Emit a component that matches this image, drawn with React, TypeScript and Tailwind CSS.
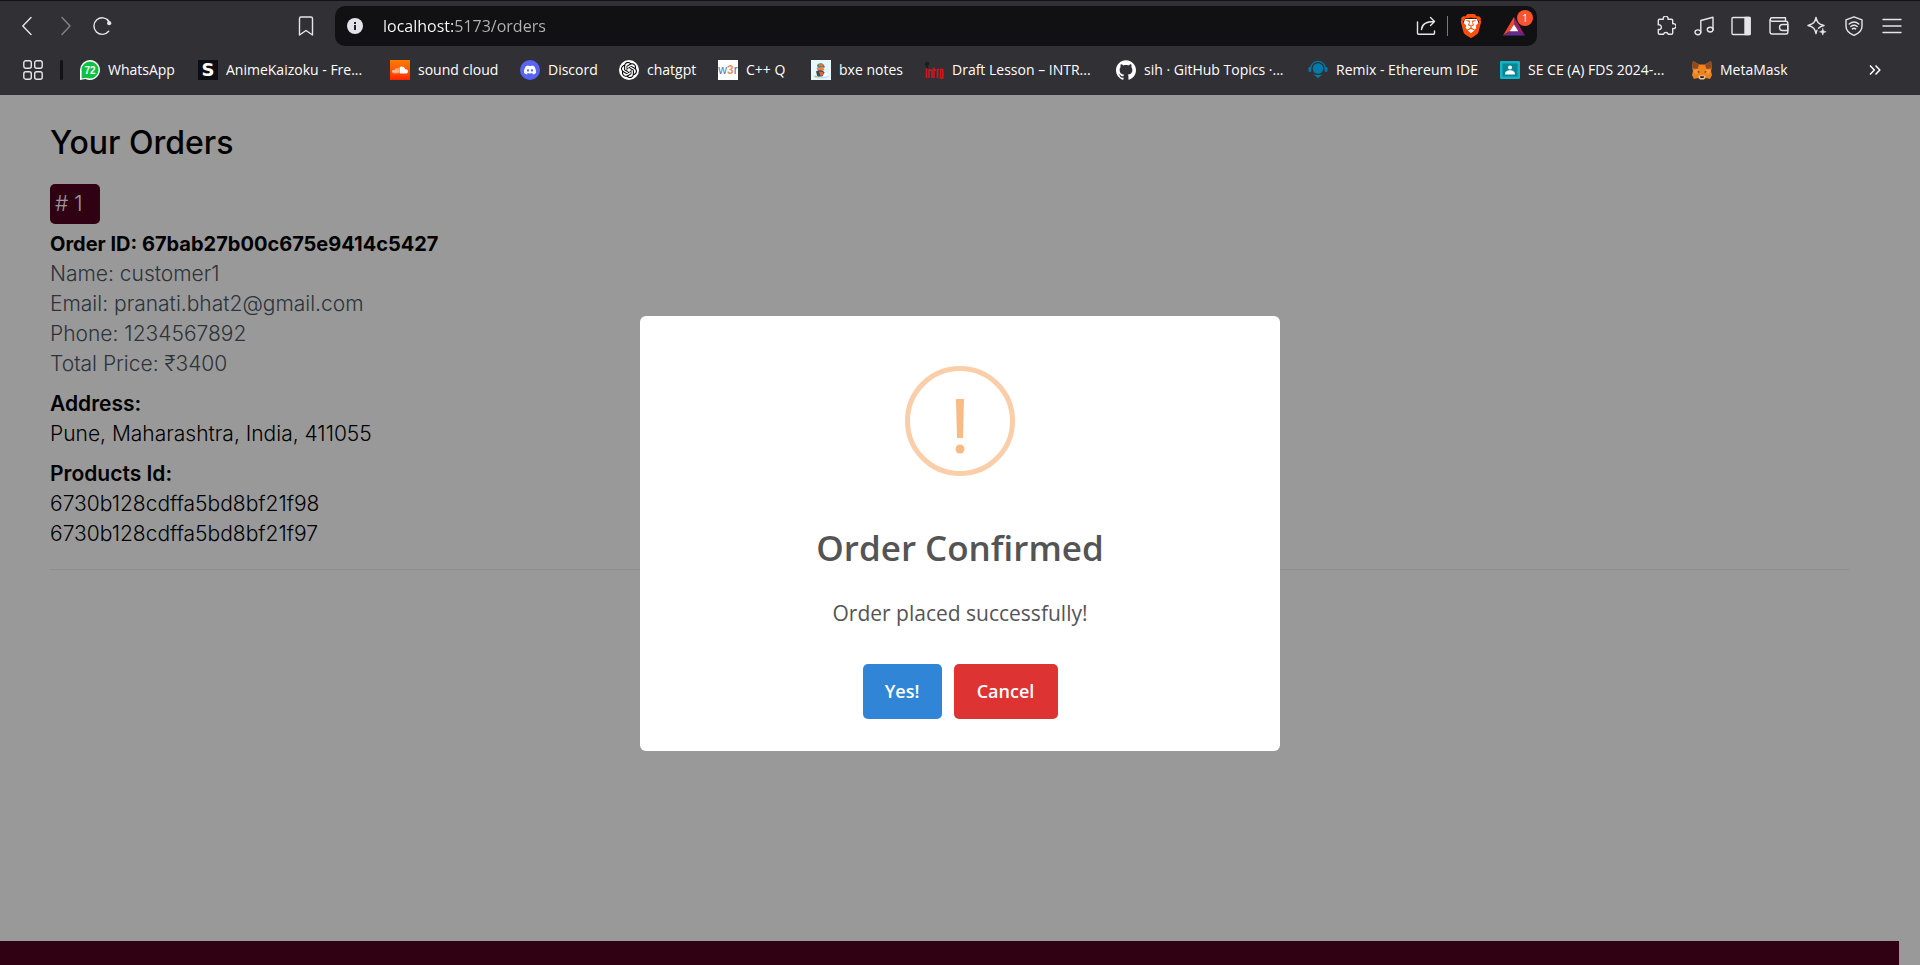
import type { ReactNode } from "react";
import { SiBrave, SiDiscord, SiGithub, SiOpenai, SiSoundcloud } from "react-icons/si";

const stroke = {
  fill: "none",
  stroke: "currentColor",
  strokeWidth: 1.4,
  strokeLinecap: "round" as const,
  strokeLinejoin: "round" as const,
};

function Glyph({ children }: { children: ReactNode }) {
  return (
    <svg viewBox="0 0 20 20" className="size-5 shrink-0" aria-hidden="true" {...stroke}>
      {children}
    </svg>
  );
}

function ToolButton({ label, children, className = "" }: { label: string; children: ReactNode; className?: string }) {
  return (
    <button type="button" aria-label={label} className={`flex size-5 shrink-0 items-center justify-center text-[#e6e6ea] ${className}`}>
      {children}
    </button>
  );
}

function WhatsAppIcon() {
  return (
    <svg viewBox="0 0 20 20" className="size-5 shrink-0" aria-hidden="true">
      <path d="M10 0a10 10 0 1 1-4.6 18.900L0 20V10A10 10 0 0 1 10 0z" fill="#fff" />
      <circle cx="10" cy="10" r="8.600" fill="#0fc143" />
      <path d="M1.600 12v6.400l5-.6z" fill="#0fc143" />
      <text x="10" y="13.500" textAnchor="middle" fontSize="10" fontWeight="700" fill="#fff" fontFamily="Liberation Sans, sans-serif">72</text>
    </svg>
  );
}

function AnimeIcon() {
  return (
    <span className="flex size-5 shrink-0 items-center justify-center bg-[#0b0e12] font-['DejaVu_Sans',sans-serif] text-lg leading-5 font-bold text-white">
      S
    </span>
  );
}

function SoundCloudIcon() {
  return (
    <span className="flex size-5 shrink-0 items-center justify-center bg-linear-to-b from-[#ff7a00] to-[#ff2200]">
      <SiSoundcloud className="size-4 text-white" />
    </span>
  );
}

function DiscordIcon() {
  return (
    <span className="flex size-5 shrink-0 items-center justify-center rounded-full bg-[#5865f2]">
      <SiDiscord className="size-3 text-white" />
    </span>
  );
}

function ChatIcon() {
  return (
    <span className="flex size-5 shrink-0 items-center justify-center rounded-full bg-white">
      <SiOpenai className="size-4 text-black" />
    </span>
  );
}

function W3rIcon() {
  return (
    <span className="flex size-5 shrink-0 items-center justify-center bg-white font-['Liberation_Sans',sans-serif] text-xs leading-5 text-[#4a7ab5]">
      w<span className="font-bold text-[#f0925a]">3</span>r
    </span>
  );
}

function PenguinIcon() {
  return (
    <svg viewBox="0 0 20 20" className="size-5 shrink-0" aria-hidden="true">
      <rect width="20" height="20" fill="#e6f8fc" />
      <path d="M2 16.500c4-2 12-2 16 0-3 2.500-13 2.500-16 0z" fill="#b9e3ef" />
      <path d="M6 5.500c1-2.500 5-3 7-.500l1 2.500-7 1z" fill="#2f8f84" />
      <path d="M7.500 4.500l4-1 1 2-4.500 1z" fill="#e9743b" />
      <path d="M5.500 8l6-1.500 2 3.500-6 2z" fill="#f08247" />
      <path d="M5 11.500c3-2 7-1.500 8.500 1l-1 3.500-6 .8z" fill="#3b4a57" />
      <path d="M8 11.500l4 .5 1 3-3.500 1z" fill="#e2653a" />
      <path d="M13 13.500c2-1 4-.5 4.500 1l-2 2-4 .3z" fill="#fff" />
      <path d="M4 15.500l3 .8 1 1-4-.3z" fill="#f0b04a" />
    </svg>
  );
}

function IntroIcon() {
  return (
    <svg viewBox="0 0 20 20" className="size-5 shrink-0" aria-hidden="true">
      <circle cx="3" cy="4" r="2.200" fill="#1e1c20" />
      <path d="M2.200 5v3h1.600V5z" fill="#1e1c20" />
      <path d="M2.500 8.500v9.500M5 18V9M5 10l3 0v8M10 7.500V18M10 10h2M13.500 18V9.500h1.500M16.500 9.500h2.300V18h-2.300z" fill="none" stroke="#d3171c" strokeWidth="1.600" />
    </svg>
  );
}

function GithubIcon() {
  return <SiGithub className="size-5 shrink-0 text-white" />;
}

function RemixIcon() {
  return (
    <svg viewBox="0 0 20 20" className="size-5 shrink-0" aria-hidden="true">
      <circle cx="10" cy="8.500" r="5.300" fill="#007aa6" />
      <path d="M2.800 8.500a7.200 7.200 0 0 1 14.400 0" fill="none" stroke="#007aa6" strokeWidth="1.300" />
      <rect x="0.500" y="7" width="2.800" height="5" rx="1.300" fill="#007aa6" />
      <rect x="16.700" y="7" width="2.800" height="5" rx="1.300" fill="#007aa6" />
      <path d="M4.500 13.500c3 2 8 2 11 0L10 18.300z" fill="#007aa6" />
    </svg>
  );
}

function ClassroomIcon() {
  return (
    <svg viewBox="0 0 20 20" className="size-5 shrink-0" aria-hidden="true">
      <rect y="1" width="20" height="18" rx="1" fill="#12b3c7" />
      <rect x="2.500" y="3.500" width="15" height="13" fill="#0a8593" />
      <circle cx="10" cy="7.500" r="2" fill="#fff" />
      <path d="M5 14.500c0-3 2-4.300 5-4.300s5 1.300 5 4.300z" fill="#fff" />
    </svg>
  );
}

function FoxIcon() {
  return (
    <svg viewBox="0 0 20 20" className="size-5 shrink-0" aria-hidden="true">
      <path d="M1 1l6 3.500h6L19 1l1 6-1 4 1 4-2 4-4-1-2 1.500H8L6 18l-4 1-2-4 1-4-1-4z" fill="#f0821f" />
      <path d="M1 1l6 3.800L5.500 9 .8 8.500 0 7zM19 1l-6 3.800L14.500 9l4.700-.5L20 7z" fill="#8f4a20" />
      <path d="M1.500 10.500l4-1.500 1.500 4-4 1zM18.500 10.500l-4-1.500-1.500 4 4 1z" fill="#f79a3a" />
      <path d="M5.500 11l2.500 1-2 .8zM14.500 11L12 12l2 .8z" fill="#3a2a22" />
      <path d="M6.500 16.500L8 19.300h4l1.500-2.800L12 15.500H8z" fill="#d9cdc2" />
      <path d="M8 16.300h4l-.5 1.800h-3z" fill="#1d1a1a" />
    </svg>
  );
}

const bookmarks = [
  { label: "WhatsApp", icon: <WhatsAppIcon />, width: "w-[98px]" },
  { label: "AnimeKaizoku - Fre...", icon: <AnimeIcon />, width: "w-[172px]" },
  { label: "sound cloud", icon: <SoundCloudIcon />, width: "w-[110px]" },
  { label: "Discord", icon: <DiscordIcon />, width: "w-[79px]" },
  { label: "chatgpt", icon: <ChatIcon />, width: "w-[79px]" },
  { label: "C++ Q", icon: <W3rIcon />, width: "w-[73px]" },
  { label: "bxe notes", icon: <PenguinIcon />, width: "w-[93px]" },
  { label: "Draft Lesson – INTR...", icon: <IntroIcon />, width: "w-[172px]" },
  { label: "sih · GitHub Topics ·...", icon: <GithubIcon />, width: "w-[172px]" },
  { label: "Remix - Ethereum IDE", icon: <RemixIcon />, width: "w-[172px]" },
  { label: "SE CE (A) FDS 2024-...", icon: <ClassroomIcon />, width: "w-[172px]" },
  { label: "MetaMask", icon: <FoxIcon />, width: "w-[98px]" },
];

function AddressBar() {
  return (
    <div className="flex h-10 min-w-0 flex-1 items-center rounded-[10px] bg-[#111113] pr-0.5 pl-3">
      <svg viewBox="0 0 16 16" className="size-4 shrink-0" aria-hidden="true">
        <circle cx="8" cy="8" r="8" fill="#e4e3ea" />
        <path d="M7 7h2v5H7zM7 4h2v2H7z" fill="#232327" />
      </svg>
      <input
        type="text"
        aria-label="Address"
        defaultValue="localhost:5173/orders"
        className="ml-5 min-w-0 flex-1 bg-[linear-gradient(90deg,#ffffff_72px,#b4b4b9_72px)] bg-clip-text text-base leading-6 text-transparent outline-none"
      />
      <div className="flex items-center">
        <ToolButton label="Share">
          <Glyph>
            <path d="M1.500 6v11.200a1 1 0 0 0 1 1h15a1 1 0 0 0 1-1V15" />
            <path d="M5.500 13.500C6 8.500 10 5.500 18 5.500M14.500 1.500l4 4-4 4" />
          </Glyph>
        </ToolButton>
        <span className="mx-[11px] h-5 w-px bg-[#77777c]" />
        <button type="button" aria-label="Shields" className="mr-5 flex h-6 w-6 items-center justify-center">
          <svg viewBox="0 0 24 24" className="size-6" aria-hidden="true">
            <path d="M6 5h12l2 6-3 7-5 3-5-3-3-7z" fill="#fff" />
            <SiBrave size={24} color="#fb4f0c" />
          </svg>
        </button>
        <button type="button" aria-label="Rewards" className="relative flex h-6 w-8 items-center">
          <svg viewBox="0 0 22 20" className="h-5 w-[22px]" aria-hidden="true">
            <path d="M11 1L0 19.500l7-4.500 4-7z" fill="#ff4724" />
            <path d="M11 1l11 18.500-7-4.500-4-7z" fill="#9e1f63" />
            <path d="M0 19.500h22L15 15H7z" fill="#662d91" />
            <path d="M11 8.200l4.300 7H6.700z" fill="#fff" />
          </svg>
          <span className="absolute -top-1 right-0.5 flex size-4 items-center justify-center rounded-full bg-[#fb542b] text-[10px] leading-4 text-white">
            1
          </span>
        </button>
      </div>
    </div>
  );
}

function BrowserChrome() {
  return (
    <header className="border-t border-[#131217] bg-[#313035] pb-[15px] font-['Open_Sans',sans-serif] text-white">
      <div className="flex items-center pt-[5px] pr-[18px] pl-[18px]">
        <div className="flex items-center gap-[17px]">
          <ToolButton label="Back">
            <Glyph><path d="M13 1.500L4.800 10l8.200 8.500" /></Glyph>
          </ToolButton>
          <ToolButton label="Forward" className="opacity-45">
            <Glyph><path d="M7 1.500l8 8.500-8 8.500" /></Glyph>
          </ToolButton>
          <ToolButton label="Reload">
            <Glyph>
              <path d="M16.700 15.300A8.300 8.300 0 1 1 17 5.300" />
              <circle cx="17.200" cy="7.200" r="2.100" fill="currentColor" stroke="none" />
              <path d="M15.500 3.500l1.700 4" />
            </Glyph>
          </ToolButton>
        </div>
        <div className="mr-[19px] ml-[184px] flex">
          <ToolButton label="Bookmark this tab">
            <Glyph><path d="M3.500 2.500a1.500 1.500 0 0 1 1.500-1.500h10a1.500 1.500 0 0 1 1.500 1.500V19L10 14.500 3.500 19z" /></Glyph>
          </ToolButton>
        </div>
        <AddressBar />
        <div className="ml-[119px] flex w-[246px] justify-between">
          <ToolButton label="Extensions">
            <Glyph>
              <path d="M3.500 3.200h3.800a2.400 2.400 0 1 1 4.600 0h3.600a1.200 1.200 0 0 1 1.200 1.200v3.400a2.500 2.500 0 1 1 0 4.700v4.600a1.200 1.200 0 0 1-1.200 1.200h-3.200a2.500 2.500 0 0 0-4.800 0H3.500a1.200 1.200 0 0 1-1.200-1.200v-3.600a2.400 2.400 0 1 0 0-4.600V4.400a1.200 1.200 0 0 1 1.200-1.200z" />
            </Glyph>
          </ToolButton>
          <ToolButton label="Media">
            <Glyph>
              <path d="M6.800 16.200V4.500L19 1.200v12.300M6.800 4.500" />
              <ellipse cx="3.900" cy="16.300" rx="2.900" ry="2.400" />
              <ellipse cx="16.200" cy="13.600" rx="2.900" ry="2.400" />
            </Glyph>
          </ToolButton>
          <ToolButton label="Sidebar">
            <Glyph>
              <rect x="1" y="1.500" width="18" height="17" rx="1.200" />
              <path d="M14 1.500h5v17h-5z" fill="currentColor" />
            </Glyph>
          </ToolButton>
          <ToolButton label="Wallet">
            <Glyph>
              <path d="M1 3.500v12.300A2.200 2.200 0 0 0 3.200 18H17a1.800 1.800 0 0 0 1.800-1.800V7A1.800 1.800 0 0 0 17 5.200H3A1.700 1.700 0 0 1 3 1.800h13.500V5" />
              <path d="M18.800 8.500h-5.300a3 3 0 0 0 0 6h5.300z" />
            </Glyph>
          </ToolButton>
          <ToolButton label="Assistant">
            <Glyph>
              <path d="M9 1.500c1 4.800 2.400 6.500 8 8-2.600.7-4.300 1.500-5.500 2.700M9 1.500c-1 5-2.500 6.500-8 8 5.500 1.400 7 3 8 8 .3-1.400.6-2.500 1-3.300" />
              <path d="M15.800 12.500c.5 2.300 1 2.800 3.400 3.300-2.400.6-2.900 1.100-3.400 3.400-.5-2.300-1-2.800-3.300-3.400 2.300-.5 2.800-1 3.300-3.300z" fill="currentColor" strokeWidth="0.500" />
            </Glyph>
          </ToolButton>
          <ToolButton label="VPN">
            <Glyph>
              <path d="M10 .8l8 3v6.400c0 4-3 7-8 9.200-5-2.200-8-5.200-8-9.200V3.800z" />
              <path d="M5.200 8c3-2.400 6.600-2.400 9.600 0M6.800 10.500c2-1.600 4.400-1.600 6.400 0" />
              <path d="M8.400 12.900c1-.8 2.200-.8 3.200 0" />
            </Glyph>
          </ToolButton>
          <ToolButton label="Menu">
            <Glyph><path d="M1 3.500h18M1 10h18M1 16.500h18" /></Glyph>
          </ToolButton>
        </div>
      </div>
      <nav aria-label="Bookmarks" className="mt-3.5 flex h-5 items-center pr-[39px] pl-[23px] text-sm leading-5">
        <ToolButton label="All bookmarks">
          <Glyph>
            <rect x="0.800" y="0.800" width="7.500" height="7.500" rx="2" />
            <rect x="11.700" y="0.800" width="7.500" height="7.500" rx="2" />
            <rect x="0.800" y="11.700" width="7.500" height="7.500" rx="2" />
            <rect x="11.700" y="11.700" width="7.500" height="7.500" rx="2" />
          </Glyph>
        </ToolButton>
        <span className="mx-[17px] h-5 w-[3px] rounded-full bg-[#131217]" />
        <div className="flex flex-1 gap-5">
          {bookmarks.map((b) => (
            <a key={b.label} href="#" className={`flex shrink-0 items-center gap-2 whitespace-nowrap ${b.width}`}>
              {b.icon}
              <span>{b.label}</span>
            </a>
          ))}
        </div>
        <button type="button" aria-label="More bookmarks" className="flex items-center">
          <svg viewBox="0 0 12 12" className="size-3" aria-hidden="true" fill="none" stroke="#fff" strokeWidth="1.500">
            <path d="M1 1.500L5.300 6 1 10.500M6.500 1.500L10.800 6l-4.300 4.500" />
          </svg>
        </button>
      </nav>
    </header>
  );
}

const customer = ["Name: customer1", "Email: pranati.bhat2@gmail.com", "Phone: 1234567892", "Total Price: ₹3400"];
const products = ["6730b128cdffa5bd8bf21f98", "6730b128cdffa5bd8bf21f97"];

function Orders() {
  return (
    <section className="px-[50px] pt-[30px] font-['Inter',sans-serif] text-[21px] leading-[30px] font-light text-black">
      <h1 className="text-[32px] leading-9 font-medium">Your Orders</h1>
      <article className="mt-[23px] border-b border-[#ededed] pb-5">
        <div className="h-10 w-[50px] rounded-[5px] bg-[#500021] px-[5px] leading-10 whitespace-nowrap text-white"># 1</div>
        <h2 className="mt-[5px] text-xl leading-[30px] font-bold">Order ID: 67bab27b00c675e9414c5427</h2>
        {customer.map((line) => (
          <p key={line} className="text-[#4b5563]">{line}</p>
        ))}
        <h3 className="mt-2.5 font-semibold">Address:</h3>
        <p>Pune, Maharashtra, India, 411055</p>
        <h3 className="mt-2.5 font-semibold">Products Id:</h3>
        <ul>
          {products.map((id) => (
            <li key={id}>{id}</li>
          ))}
        </ul>
      </article>
    </section>
  );
}

function ConfirmDialog() {
  return (
    <div className="absolute inset-0 flex items-center justify-center bg-black/40 pt-[7px]">
      <div
        role="dialog"
        aria-modal="true"
        aria-labelledby="dialog-title"
        className="flex w-[640px] max-w-full flex-col items-center rounded-md bg-white pt-[50px] pb-8 font-['Open_Sans',sans-serif] text-[#545454]"
      >
        <svg viewBox="0 0 110 110" className="size-[110px]" aria-hidden="true">
          <circle cx="55" cy="55" r="52.500" fill="none" stroke="#facea8" strokeWidth="5" />
          <path d="M51 33h8l-1 39h-6z" fill="#f8bb86" />
          <circle cx="55" cy="83" r="4.500" fill="#f8bb86" />
        </svg>
        <h2 id="dialog-title" className="mt-[42px] text-[35px] leading-[60px] font-semibold">Order Confirmed</h2>
        <p className="mt-5 text-[21px] leading-[30px]">Order placed successfully!</p>
        <div className="mt-9 flex gap-3 text-lg leading-[55px] font-semibold text-white">
          <button type="button" className="w-[79px] rounded-[5px] bg-[#3085d6]">Yes!</button>
          <button type="button" className="w-[104px] rounded-[5px] bg-[#dd3333]">Cancel</button>
        </div>
      </div>
    </div>
  );
}

export default function App() {
  return (
    <div className="flex min-h-screen flex-col bg-white">
      <BrowserChrome />
      <main className="relative flex flex-1 flex-col pr-[21px]">
        <Orders />
        <footer className="mt-auto h-6 bg-[#500021]" />
        <ConfirmDialog />
      </main>
    </div>
  );
}
